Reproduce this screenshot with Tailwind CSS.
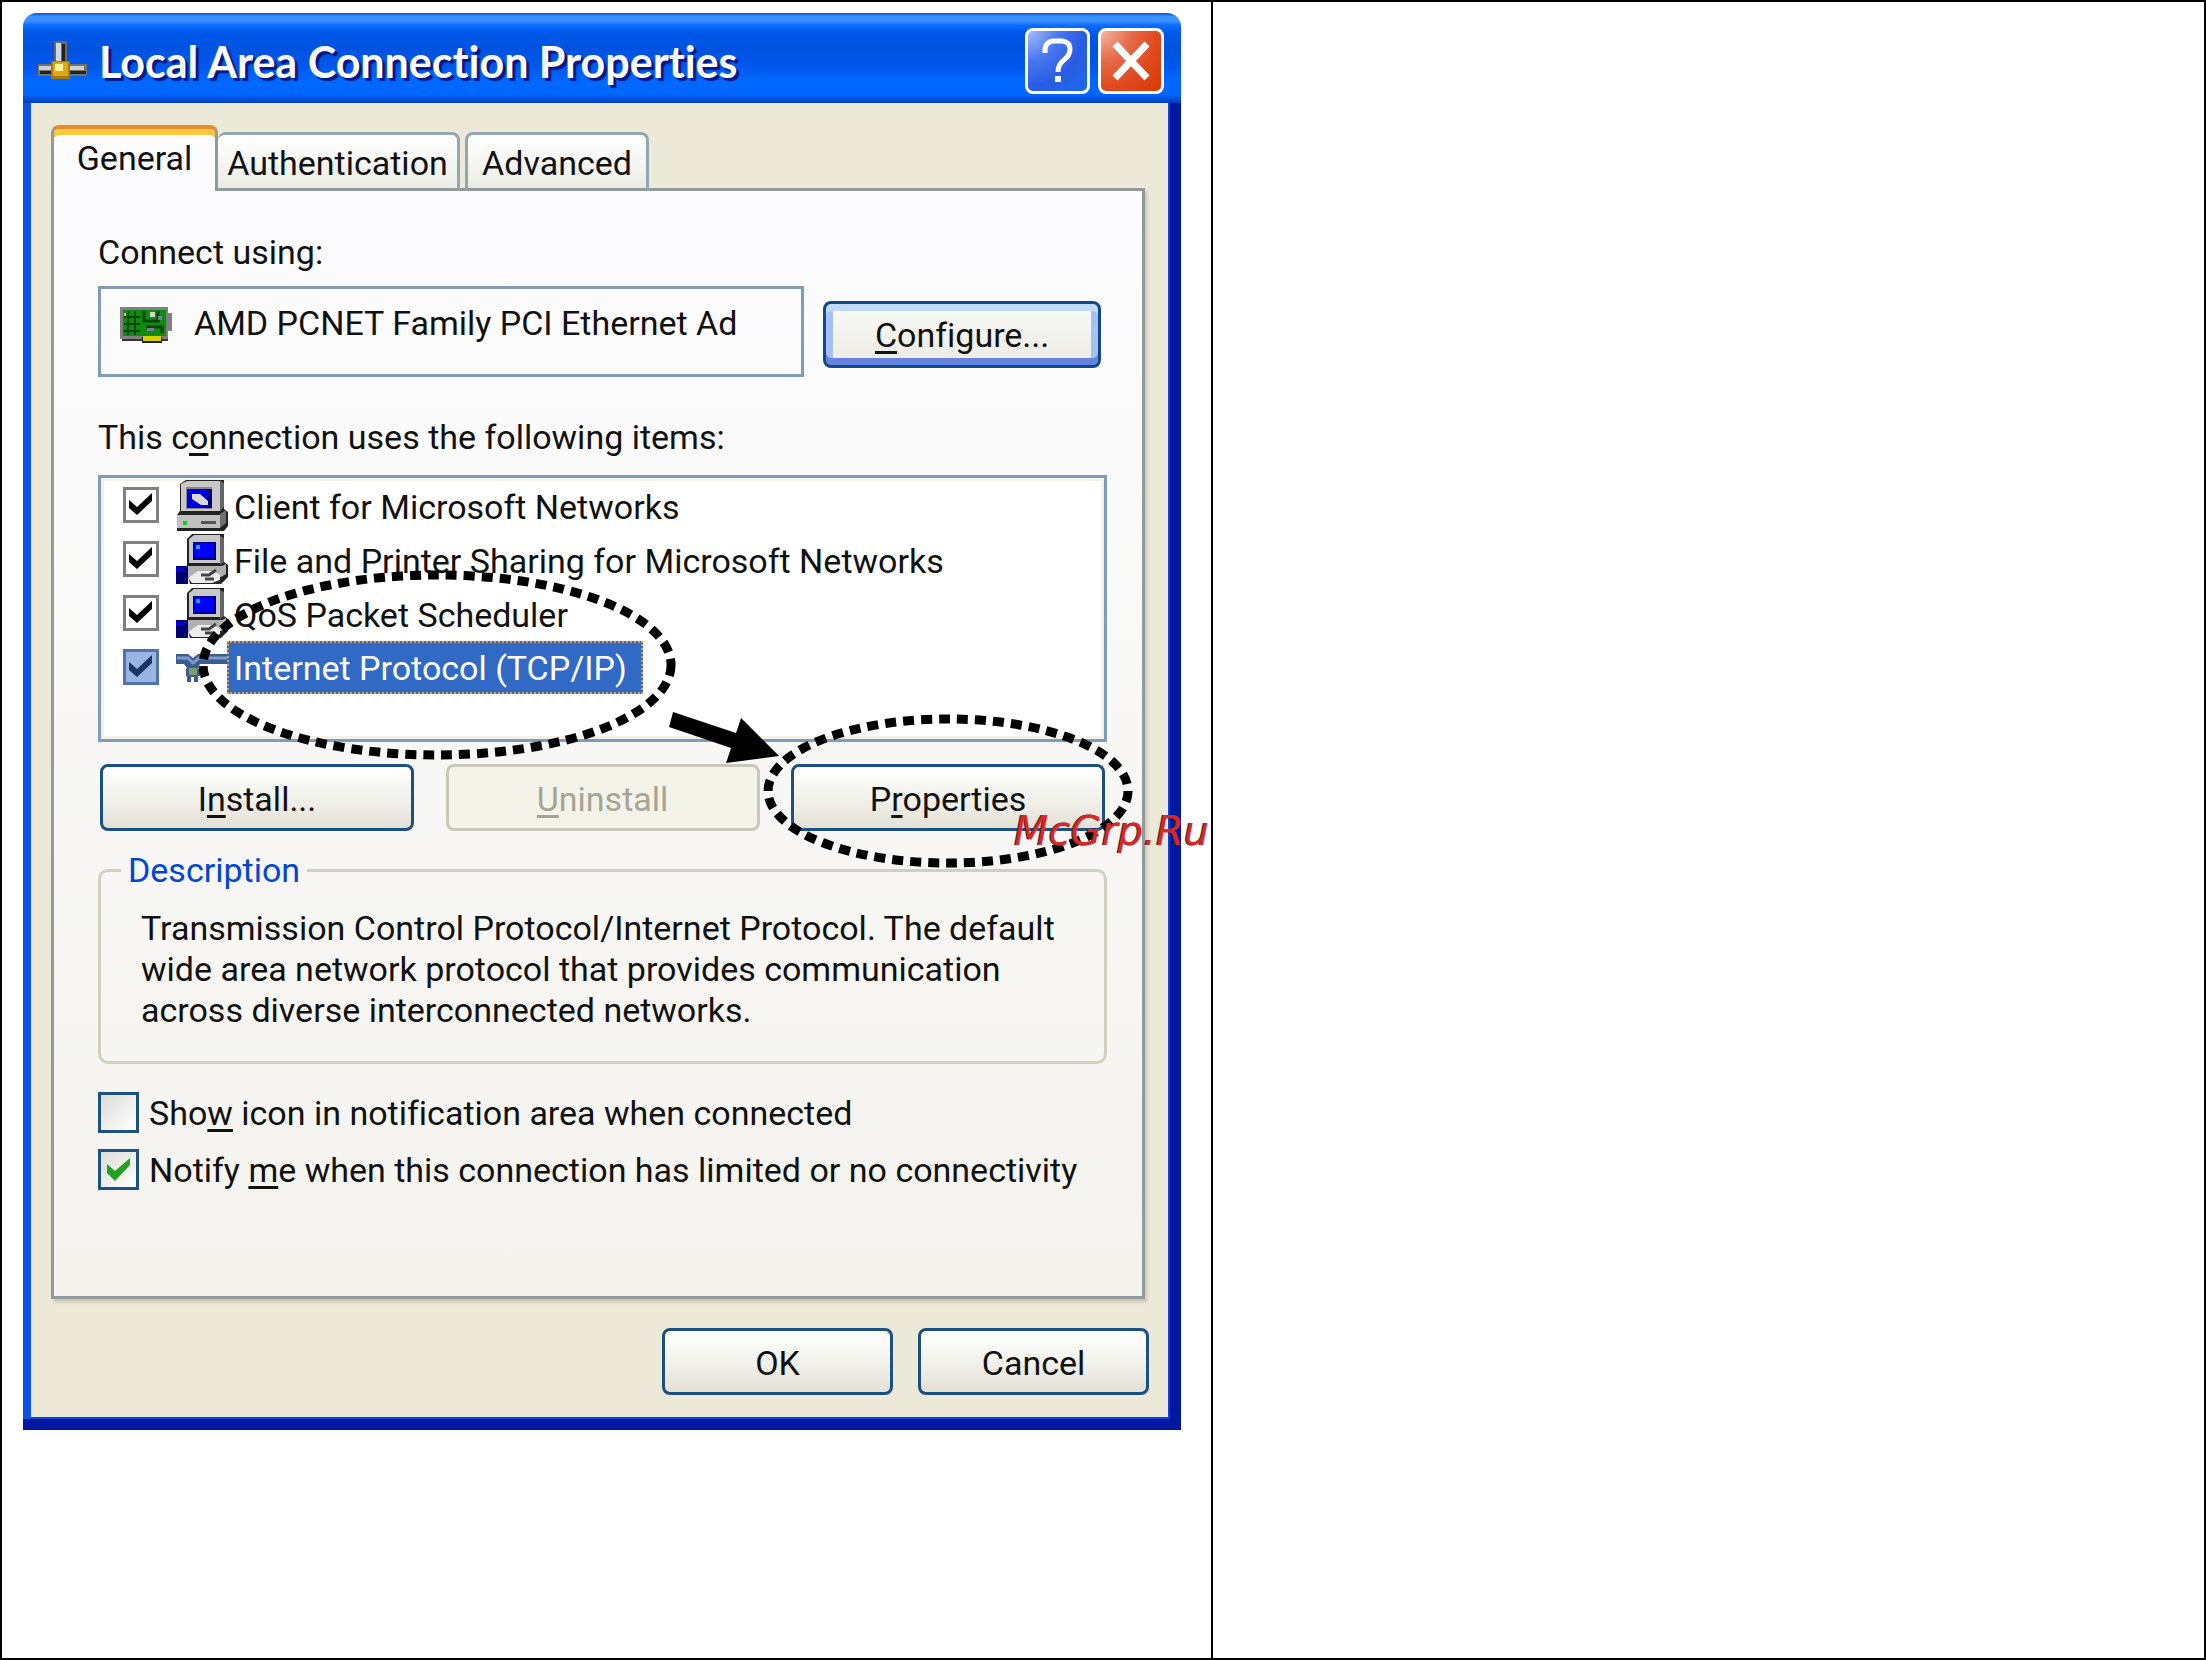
<!DOCTYPE html>
<html lang="en">
<head>
    <meta charset="UTF-8" />
    <meta name="viewport" content="width=device-width, initial-scale=1.0" />
    <title>Local Area Connection Properties</title>
    <script src="https://cdn.jsdelivr.net/npm/@tailwindcss/browser@4"></script>
</head>
<body class="bg-white text-[#111] text-[34px] leading-[44px] font-[Roboto,'Liberation_Sans',sans-serif] [font-variant-ligatures:none]">

    <!-- Two cell page frame -->
    <div class="min-h-screen grid grid-cols-[55%_1fr] border-2 border-black">
        <div class="border-r-2 border-black pt-[11px] pl-[21px] pr-[30px] pb-10">

            <!-- Dialog window -->
            <main class="relative bg-[#ece9d8] rounded-t-[14px] border-b-[11px] border-[#0018a0]">

                <!-- Title bar -->
                <header class="h-[90px] flex items-center gap-2 pl-3 pr-[17px] pt-[6px] rounded-t-[14px] bg-[linear-gradient(to_bottom,#0a50d8_0%,#3a93ff_4%,#3a90ff_9%,#0a6cff_14%,#0058e8_22%,#0053e0_40%,#0058ee_60%,#0068ff_76%,#0068ff_90%,#0048d0_97%,#003cb8_100%)]">
                    <svg class="w-14 h-10 shrink-0" viewBox="0 0 56 40">
                        <path d="M19 0h13v24h-13z" fill="#6a6a60" />
                        <path d="M21 2h5v21h-5z" fill="#d0dae4" />
                        <path d="M27 3h3v20h-3z" fill="#222" />
                        <path d="M3 23h49v12H3z" fill="#77735c" />
                        <path d="M4 25h45v4H4z" fill="#c8d2dc" />
                        <path d="M5 30h46v3H5z" fill="#20242c" />
                        <path d="M16 20h19v18H16z" fill="#a87808" />
                        <path d="M18 21h15v14H18z" fill="#e0a818" />
                        <path d="M20 23h8v7h-8z" fill="#fff0a0" />
                    </svg>
                    <h1 class="grow pt-[2px] text-white text-[43px] font-bold font-[Lato,sans-serif] whitespace-nowrap [text-shadow:3px_3px_1px_#0a1883]">Local Area Connection Properties</h1>
                    <button aria-label="Help" class="w-[65px] h-[66px] shrink-0 grid place-items-center rounded-[8px] border-[3px] border-white bg-[radial-gradient(circle_at_0%_0%,#a9bdfb_0%,#4a78f0_35%,#2a5ce4_65%,#1a6af0_100%)]">
                        <svg class="w-10 h-12" viewBox="0 0 40 48" fill="none" stroke="#fff" stroke-width="5">
                            <path d="M7 16V12Q8 5 15 4H24Q32 5 32 12Q32 18 27 22Q20 27 20 35" />
                            <path d="M20 39v6" stroke-width="6" />
                        </svg>
                    </button>
                    <button aria-label="Close" class="w-[66px] h-[66px] shrink-0 grid place-items-center rounded-[8px] border-[3px] border-white bg-[radial-gradient(circle_at_0%_0%,#f4b8a4_0%,#e66c4c_35%,#e04a20_65%,#d83a00_100%)]">
                        <svg class="w-10 h-10" viewBox="0 0 40 40" stroke="#fff" stroke-width="7">
                            <path d="M4 3L36 37M36 3L4 37" />
                        </svg>
                    </button>
                </header>

                <!-- Window body with the blue frame -->
                <div class="border-l-[8px] border-r-[11px] border-l-[#0a52e8] border-r-[#0018a0] pt-[22px] pl-5 pr-[21px] pb-6 shadow-[inset_-2px_-2px_0_#0840e0]">

                    <!-- Tabs -->
                    <nav role="tablist" class="relative flex items-end pr-1 -mb-[3px]">
                        <button role="tab" aria-selected="true" class="w-[167px] h-[66px] pb-1 rounded-t-[8px] border-x-[3px] border-x-[#919b9c] border-t-[4px] border-t-[#e68b2c] bg-[#fcfcfe] shadow-[inset_0_6px_0_#ffc73c]">General</button>
                        <button role="tab" class="w-[242px] h-[59px] pt-[2px] rounded-t-[8px] border-[3px] border-l-0 border-[#91a7b4] border-b-[#919b9c] bg-linear-to-b from-white to-[#ecece6]">Authentication</button>
                        <button role="tab" class="w-[184px] h-[59px] pt-[2px] ml-[5px] rounded-t-[8px] border-[3px] border-[#91a7b4] border-b-[#919b9c] bg-linear-to-b from-white to-[#ecece6]">Advanced</button>
                    </nav>

                    <!-- General tab panel -->
                    <section role="tabpanel" class="mr-1 pt-[39px] pl-11 pr-[35px] pb-[106px] border-[3px] border-[#919b9c] shadow-[2px_3px_3px_#c8c5b4] bg-linear-to-b from-[#fcfcfe] to-[#f4f3ee]">
                        <p>Connect using:</p>
                        <div class="flex items-start gap-[19px] mt-3 pr-[6px]">
                            <div class="grow h-[91px] flex gap-[22px] pl-[19px] pt-3 border-[3px] border-[#7f9db9]">
                                <svg class="w-[52px] h-[36px] mt-[6px] shrink-0" viewBox="0 0 52 36">
                                    <path d="M0 0h48v6h4v18h-4v8H0z" fill="#808080" />
                                    <path d="M3 3h43v26H3z" fill="#108a10" />
                                    <path d="M2 32h46v2H2z" fill="#333" />
                                    <path d="M4 10h16M4 17h16M4 24h16M8 4v24M15 4v24" stroke="#064806" stroke-width="2" />
                                    <path d="M24 4v10h9M38 4v10h-5M26 20h16v6" stroke="#064806" stroke-width="3" fill="none" />
                                    <path d="M30 5h5v5h-5z" fill="#d0d8d0" />
                                    <path d="M27 21h7v3h-7zM38 9h4v4h-4z" fill="#7a7aa0" />
                                    <path d="M4 6h2v3H4z" fill="#e0d020" />
                                    <path d="M22 30h20v6H22z" fill="#222" />
                                    <path d="M23 29h18v5H23z" fill="#d8d000" />
                                </svg>
                                <span class="whitespace-nowrap">AMD PCNET Family PCI Ethernet Ad</span>
                            </div>
                            <button class="w-[278px] h-[67px] mt-[15px] shrink-0 rounded-[8px] border-[3px] border-[#10488a] bg-linear-to-b from-[#fafaf8] to-[#ecebe4] shadow-[inset_0_7px_0_#c0dafc,inset_0_-7px_0_#6484e0,inset_7px_0_0_#a4c0f4,inset_-7px_0_0_#a4c0f4]"><u class="underline-offset-4 decoration-[3px]">C</u>onfigure...</button>
                        </div>

                        <p class="mt-[38px]">This c<u class="underline-offset-4 decoration-[3px]">o</u>nnection uses the following items:</p>
                        <ul class="h-[267px] mt-4 border-[3px] border-[#7f9db9] bg-white shadow-[inset_0_0_0_3px_#f4f2e8]">
                            <li>
                                <label class="h-[54px] flex items-center pl-[22px]">
                                    <span class="relative w-9 h-9 mr-[17px]">
                                        <input type="checkbox" checked class="block appearance-none w-9 h-9 border-[3px] border-[#808080] bg-white" />
                                        <svg class="absolute inset-0 w-9 h-9 pointer-events-none" viewBox="0 0 36 36"><path d="M6 13l8 7L29 6v8L14 28L6 21z" fill="#000" /></svg>
                                    </span>
                                    <svg class="w-[52px] h-[52px] mr-[6px]" viewBox="0 0 52 52">
                                        <path d="M10 1h38v29l4 3v14l-4 5H1V36l3-4V5z" fill="#222" />
                                        <path d="M5 5L11 2h33v30H5z" fill="#c8c8c8" />
                                        <path d="M44 2l4 2v24l-4 4z" fill="#666" />
                                        <path d="M10 8h26v22H10z" fill="#888" />
                                        <path d="M11 10h25v19H11z" fill="#0000e0" />
                                        <path d="M31 10h5v19h-5z" fill="#000080" />
                                        <path d="M16 15h8l8 7v4h-7l-9-6z" fill="#d8d8d8" />
                                        <path d="M1 36h43v13H1z" fill="#c0c0c0" />
                                        <path d="M44 35l6-4v13l-6 5z" fill="#707070" />
                                        <path d="M7 42h4v4H7z" fill="#00d020" />
                                        <path d="M25 42h15v3H25z" fill="#555" />
                                    </svg>
                                    <span class="pt-1">Client for Microsoft Networks</span>
                                </label>
                            </li>
                            <li>
                                <label class="h-[54px] flex items-center pl-[22px]">
                                    <span class="relative w-9 h-9 mr-[17px]">
                                        <input type="checkbox" checked class="block appearance-none w-9 h-9 border-[3px] border-[#808080] bg-white" />
                                        <svg class="absolute inset-0 w-9 h-9 pointer-events-none" viewBox="0 0 36 36"><path d="M6 13l8 7L29 6v8L14 28L6 21z" fill="#000" /></svg>
                                    </span>
                                    <svg class="w-[52px] h-[52px] mr-[6px]" viewBox="0 0 52 52">
                                        <path d="M16 1h32v28l4 3v12l-7 7H14L11 40V6z" fill="#222" />
                                        <path d="M13 6l5-4h26v28H13z" fill="#c8c8c8" />
                                        <path d="M44 3l4 2v24l-4 3z" fill="#666" />
                                        <path d="M17 9h23v18H17z" fill="#000080" />
                                        <path d="M18 10h20v14H18z" fill="#0000ff" />
                                        <path d="M20 12h4v4h-4z" fill="#20a0ff" />
                                        <path d="M12 33h34l4-2v10l-5 3H12z" fill="#b0b0b0" />
                                        <path d="M12 45l10-7h16l6 4v5l-8 3H16z" fill="#ececec" />
                                        <path d="M25 42h8l7-5M29 46h9" stroke="#444" stroke-width="3" fill="none" />
                                        <path d="M0 33h12v18H0z" fill="#000070" />
                                        <path d="M0 34h8v5H0z" fill="#0000e0" />
                                    </svg>
                                    <span class="pt-1">File and Printer Sharing for Microsoft Networks</span>
                                </label>
                            </li>
                            <li>
                                <label class="h-[54px] flex items-center pl-[22px]">
                                    <span class="relative w-9 h-9 mr-[17px]">
                                        <input type="checkbox" checked class="block appearance-none w-9 h-9 border-[3px] border-[#808080] bg-white" />
                                        <svg class="absolute inset-0 w-9 h-9 pointer-events-none" viewBox="0 0 36 36"><path d="M6 13l8 7L29 6v8L14 28L6 21z" fill="#000" /></svg>
                                    </span>
                                    <svg class="w-[52px] h-[52px] mr-[6px]" viewBox="0 0 52 52">
                                        <path d="M16 1h32v28l4 3v12l-7 7H14L11 40V6z" fill="#222" />
                                        <path d="M13 6l5-4h26v28H13z" fill="#c8c8c8" />
                                        <path d="M44 3l4 2v24l-4 3z" fill="#666" />
                                        <path d="M17 9h23v18H17z" fill="#000080" />
                                        <path d="M18 10h20v14H18z" fill="#0000ff" />
                                        <path d="M20 12h4v4h-4z" fill="#20a0ff" />
                                        <path d="M12 33h34l4-2v10l-5 3H12z" fill="#b0b0b0" />
                                        <path d="M12 45l10-7h16l6 4v5l-8 3H16z" fill="#ececec" />
                                        <path d="M25 42h8l7-5M29 46h9" stroke="#444" stroke-width="3" fill="none" />
                                        <path d="M0 33h12v18H0z" fill="#000070" />
                                        <path d="M0 34h8v5H0z" fill="#0000e0" />
                                    </svg>
                                    <span class="pt-1">QoS Packet Scheduler</span>
                                </label>
                            </li>
                            <li>
                                <label class="h-[54px] flex items-center pl-[22px]">
                                    <span class="relative w-9 h-9 mr-[17px]">
                                        <input type="checkbox" checked class="block appearance-none w-9 h-9 border-[3px] border-[#5272a8] bg-[#98b4e2]" />
                                        <svg class="absolute inset-0 w-9 h-9 pointer-events-none" viewBox="0 0 36 36"><path d="M6 13l8 7L29 6v8L14 28L6 21z" fill="#183462" /></svg>
                                    </span>
                                    <svg class="w-[51px] h-[52px]" viewBox="0 0 51 52">
                                        <path d="M0 13h12l5 4 5-4h29v10H24l-2 4v14h-4v-5h-3v5h-4V27l-3-4H0z" fill="#3c5c90" />
                                        <path d="M1 17h11l5 5 6-5h28" stroke="#7c9cc8" stroke-width="3" fill="none" />
                                        <path d="M10 28h14v7H10z" fill="#3c5c90" />
                                        <path d="M13 27h8v7h-8z" fill="#7e9c70" />
                                    </svg>
                                    <span class="h-[53px] leading-[51px] pl-[5px] pr-[14px] border-2 border-dotted border-[#e0a040] bg-[#316ac5] text-white">Internet Protocol (TCP/IP)</span>
                                </label>
                            </li>
                        </ul>

                        <div class="flex justify-between mt-[22px] pl-[2px] pr-[2px]">
                            <button class="w-[314px] h-[67px] pt-[2px] rounded-[8px] border-[3px] border-[#1c5080] bg-linear-to-b from-white via-[#f2f2ec] to-[#e4e0d6]">I<u class="underline-offset-4 decoration-[3px]">n</u>stall...</button>
                            <button disabled class="w-[314px] h-[67px] pt-[2px] rounded-[8px] border-[3px] border-[#cac8bb] bg-[#f4f3e9] text-[#a6a591]"><u class="underline-offset-4 decoration-[3px]">U</u>ninstall</button>
                            <button class="w-[314px] h-[67px] pt-[2px] rounded-[8px] border-[3px] border-[#1c5080] bg-linear-to-b from-white via-[#f2f2ec] to-[#e4e0d6]">P<u class="underline-offset-4 decoration-[3px]">r</u>operties</button>
                        </div>

                        <fieldset class="h-[216px] mt-[17px] pl-[40px] pt-4 rounded-[10px] border-[3px] border-[#d0d0bf]">
                            <legend class="-ml-[20px] px-[7px] text-[#0046d5]">Description</legend>
                            <p class="leading-[41px]">Transmission Control Protocol/Internet Protocol. The default<br />wide area network protocol that provides communication<br />across diverse interconnected networks.</p>
                        </fieldset>

                        <div class="grid gap-4 mt-7">
                            <label class="h-[41px] flex items-center gap-[10px]">
                                <input type="checkbox" class="appearance-none w-[41px] h-[41px] border-[3px] border-[#1c5180] bg-linear-to-br from-[#dcdcd7] to-white" />
                                <span>Sho<u class="underline-offset-4 decoration-[3px]">w</u> icon in notification area when connected</span>
                            </label>
                            <label class="h-[41px] flex items-center gap-[10px]">
                                <span class="relative w-[41px] h-[41px] shrink-0">
                                    <input type="checkbox" checked class="block appearance-none w-[41px] h-[41px] border-[3px] border-[#1c5180] bg-linear-to-br from-[#dcdcd7] to-white" />
                                    <svg class="absolute inset-0 w-[41px] h-[41px] pointer-events-none" viewBox="0 0 41 41"><path d="M9 15l8 7L32 9v7L17 32L9 24z" fill="#21a121" /></svg>
                                </span>
                                <span class="whitespace-nowrap">Notify <u class="underline-offset-4 decoration-[3px]">m</u>e when this connection has limited or no connectivity</span>
                            </label>
                        </div>
                    </section>

                    <footer class="flex justify-end gap-[25px] mt-[29px]">
                        <button class="w-[231px] h-[67px] pt-[2px] rounded-[8px] border-[3px] border-[#1c5080] bg-linear-to-b from-white via-[#f2f2ec] to-[#e4e0d6]">OK</button>
                        <button class="w-[231px] h-[67px] pt-[2px] rounded-[8px] border-[3px] border-[#1c5080] bg-linear-to-b from-white via-[#f2f2ec] to-[#e4e0d6]">Cancel</button>
                    </footer>
                </div>

                <!-- Hand drawn marks over the dialog -->
                <svg class="absolute inset-0 w-full h-full pointer-events-none" viewBox="23 13 1158 1406" fill="none" stroke="#000" stroke-width="9" stroke-dasharray="11 7">
                    <ellipse cx="437" cy="665" rx="234" ry="90" />
                    <ellipse cx="948" cy="791" rx="180" ry="72" />
                    <path d="M673 712L736 733L741 718L779 756L726 763L731 748L669 727z" fill="#000" stroke="none" />
                </svg>
                <span class="absolute top-[796px] -right-[28px] text-[40px] italic text-[#e02424] font-['DejaVu_Sans',sans-serif] [text-shadow:-1px_0_0_#333]">McGrp.Ru</span>
            </main>
        </div>
        <div></div>
    </div>

</body>
</html>
